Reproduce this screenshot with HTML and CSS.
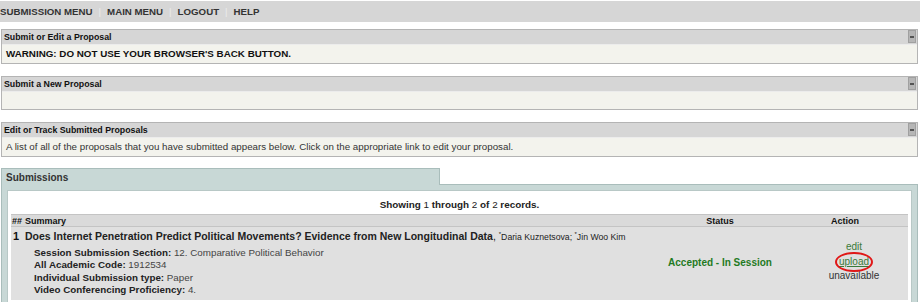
FILE: index.html
```html
<!DOCTYPE html>
<html lang="en">
<head>
  <meta charset="UTF-8">
  <meta name="viewport" content="width=device-width, initial-scale=1.0">
  <title>Submission Menu</title>
  <link rel="stylesheet" href="styles.css">
</head>
<body>

  <div class="topnav">
    <a href="#">SUBMISSION MENU</a><span class="sep">|</span>
    <a href="#">MAIN MENU</a><span class="sep">|</span>
    <a href="#">LOGOUT</a><span class="sep">|</span>
    <a href="#">HELP</a>
  </div>

  <div class="panel">
    <div class="panel-head">Submit or Edit a Proposal <span class="toggle"></span></div>
    <div class="panel-body warn">WARNING: DO NOT USE YOUR BROWSER'S BACK BUTTON.</div>
  </div>

  <div class="panel">
    <div class="panel-head">Submit a New Proposal <span class="toggle"></span></div>
    <div class="panel-body empty"></div>
  </div>

  <div class="panel">
    <div class="panel-head">Edit or Track Submitted Proposals <span class="toggle"></span></div>
    <div class="panel-body">A list of all of the proposals that you have submitted appears below. Click on the appropriate link to edit your proposal.</div>
  </div>

  <div class="subs">
    <div class="subs-tabrow">
      <div class="subs-tab">Submissions</div>
      <div class="subs-tabfill"></div>
    </div>
    <div class="subs-box">
      <div class="subs-inner">
        <div class="showing">Showing <span>1</span> through <span>2</span> of <span>2</span> records.</div>
        <table class="results">
          <tr class="head">
            <th class="num">##</th>
            <th class="summary">Summary</th>
            <th class="status">Status</th>
            <th class="action">Action</th>
          </tr>
          <tr class="row">
            <td class="num">1</td>
            <td class="summary">
              <div class="title"><b>Does Internet Penetration Predict Political Movements? Evidence from New Longitudinal Data</b>, <span class="authors"><sup>*</sup>Daria Kuznetsova; <sup>*</sup>Jin Woo Kim</span></div>
              <div class="details">
                <div><b>Session Submission Section:</b> 12. Comparative Political Behavior</div>
                <div><b>All Academic Code:</b> 1912534</div>
                <div><b>Individual Submission type:</b> Paper</div>
                <div><b>Video Conferencing Proficiency:</b> 4.</div>
              </div>
            </td>
            <td class="status accepted">Accepted - In Session</td>
            <td class="action">
              <a href="#" class="edit">edit</a>
              <a href="#" class="upload">upload</a>
              <span class="na">unavailable</span>
            </td>
          </tr>
        </table>
      </div>
    </div>
  </div>

</body>
</html>
```

FILE: styles.css
```css
body {
  font-family: "Liberation Sans", Arial, sans-serif;
  background-color: #fff;
  color: #222;
  margin: 0;
  padding: 0;
  width: 922px;
  height: 302px;
  overflow: hidden;
}

a {
  color: inherit;
  text-decoration: none;
}

.topnav {
  background-color: #d6d6d6;
  height: 21px;
  margin: 1px 2px 0 0;
  display: flex;
  align-items: center;
  font-size: 9.7px;
  font-weight: bold;
  color: #333;
}

.topnav .sep {
  color: #ececec;
  font-weight: normal;
  margin: 0 6px;
}

.panel {
  margin: 7px 4px 0 1px;
  border: 1px solid #b4b4b4;
  background-color: #f3f3ed;
}

.panel + .panel {
  margin-top: 12px;
}

.panel-head {
  background-color: #d6d6d6;
  height: 14px;
  line-height: 14px;
  padding-left: 2px;
  font-size: 8.8px;
  font-weight: bold;
  color: #111;
  position: relative;
  border-bottom: 1px solid #ececec;
}

.toggle {
  position: absolute;
  right: 1px;
  top: 0;
  width: 8px;
  height: 13px;
  background-color: #b6b6b6;
  border: 1px solid #a0a0a0;
  box-sizing: border-box;
}

.toggle::after {
  content: "";
  position: absolute;
  left: 1px;
  right: 1px;
  top: 5px;
  height: 2px;
  background-color: #555;
}

.panel-body {
  height: 18px;
  line-height: 18px;
  padding-left: 4px;
  font-size: 9.75px;
  color: #333;
}

.panel-body.warn {
  font-size: 9.8px;
  font-weight: bold;
  color: #111;
}

.panel-body.empty {
  height: 17px;
}

.subs {
  margin: 11px 4px 0 1px;
}

.subs-tabrow {
  display: flex;
  height: 17px;
}

.subs-tab {
  width: 439px;
  background-color: #c8d8d6;
  border: 1px solid #a9bdbb;
  border-bottom: none;
  font-size: 10px;
  font-weight: bold;
  color: #333;
  line-height: 17px;
  padding-left: 4px;
  box-sizing: border-box;
}

.subs-tabfill {
  flex: 1;
  border-bottom: 1px solid #a9bdbb;
}

.subs-box {
  background-color: #c8d8d6;
  border: 1px solid #a9bdbb;
  border-top: none;
  padding: 5px 5px 0 5px;
}

.subs-inner {
  background-color: #fff;
  border: 1px solid #b8c8c6;
  border-bottom: none;
  padding: 0 3px;
  height: 111px;
  overflow: hidden;
}

.showing {
  text-align: center;
  font-size: 9.9px;
  font-weight: bold;
  color: #222;
  height: 23px;
  line-height: 28px;
}

.showing span {
  font-weight: normal;
}

.results {
  width: 100%;
  border-collapse: collapse;
  font-size: 10.5px;
  color: #333;
}

.results th {
  background-color: #dadada;
  font-size: 9px;
  font-weight: bold;
  color: #111;
  height: 11px;
  padding: 0;
  border-top: 1px solid #c4c4c4;
  border-bottom: 1px solid #c4c4c4;
  text-align: left;
}

.results th.status,
.results th.action {
  text-align: center;
}

.results .num {
  width: 12px;
  padding-left: 1px;
}

.results .status {
  width: 160px;
}

.results .action {
  width: 90px;
  padding-right: 18px;
}

.results .row {
  height: 73px;
}

.results .row td {
  background-color: #e0e0e0;
  vertical-align: top;
  padding: 3px 0 0 0;
}

.results .row td.num {
  font-weight: bold;
  color: #111;
  padding-left: 2px;
  font-size: 11px;
  line-height: 13px;
}

.title {
  font-size: 10.5px;
  color: #222;
  line-height: 13px;
}

.title b {
  color: #222;
}

.authors {
  font-size: 8.7px;
}

.authors sup {
  font-size: 6px;
  line-height: 0;
  vertical-align: 4px;
}

.details {
  margin-top: 3px;
  padding-left: 9px;
  line-height: 12.4px;
  font-size: 9.8px;
  color: #444;
}

.details b {
  color: #222;
}

.results .row td.accepted {
  text-align: center;
  font-weight: bold;
  color: #1f7a1f;
  font-size: 10px;
  line-height: 14px;
  padding-top: 29px;
}

.results .row td.action {
  text-align: center;
  line-height: 14.5px;
  font-size: 10px;
  padding-top: 13px;
}

td.action a,
td.action span {
  display: block;
}

td.action .edit {
  color: #3a7a3a;
}

td.action .upload {
  color: #3a7a3a;
  text-decoration: underline;
  position: relative;
  width: 36px;
  margin: 0 auto;
}

td.action .upload::after {
  content: "";
  position: absolute;
  left: -1px;
  right: -1px;
  top: -3px;
  bottom: -3px;
  border: 2px solid #e01818;
  border-radius: 50%;
}

td.action .na {
  color: #333;
}
```
